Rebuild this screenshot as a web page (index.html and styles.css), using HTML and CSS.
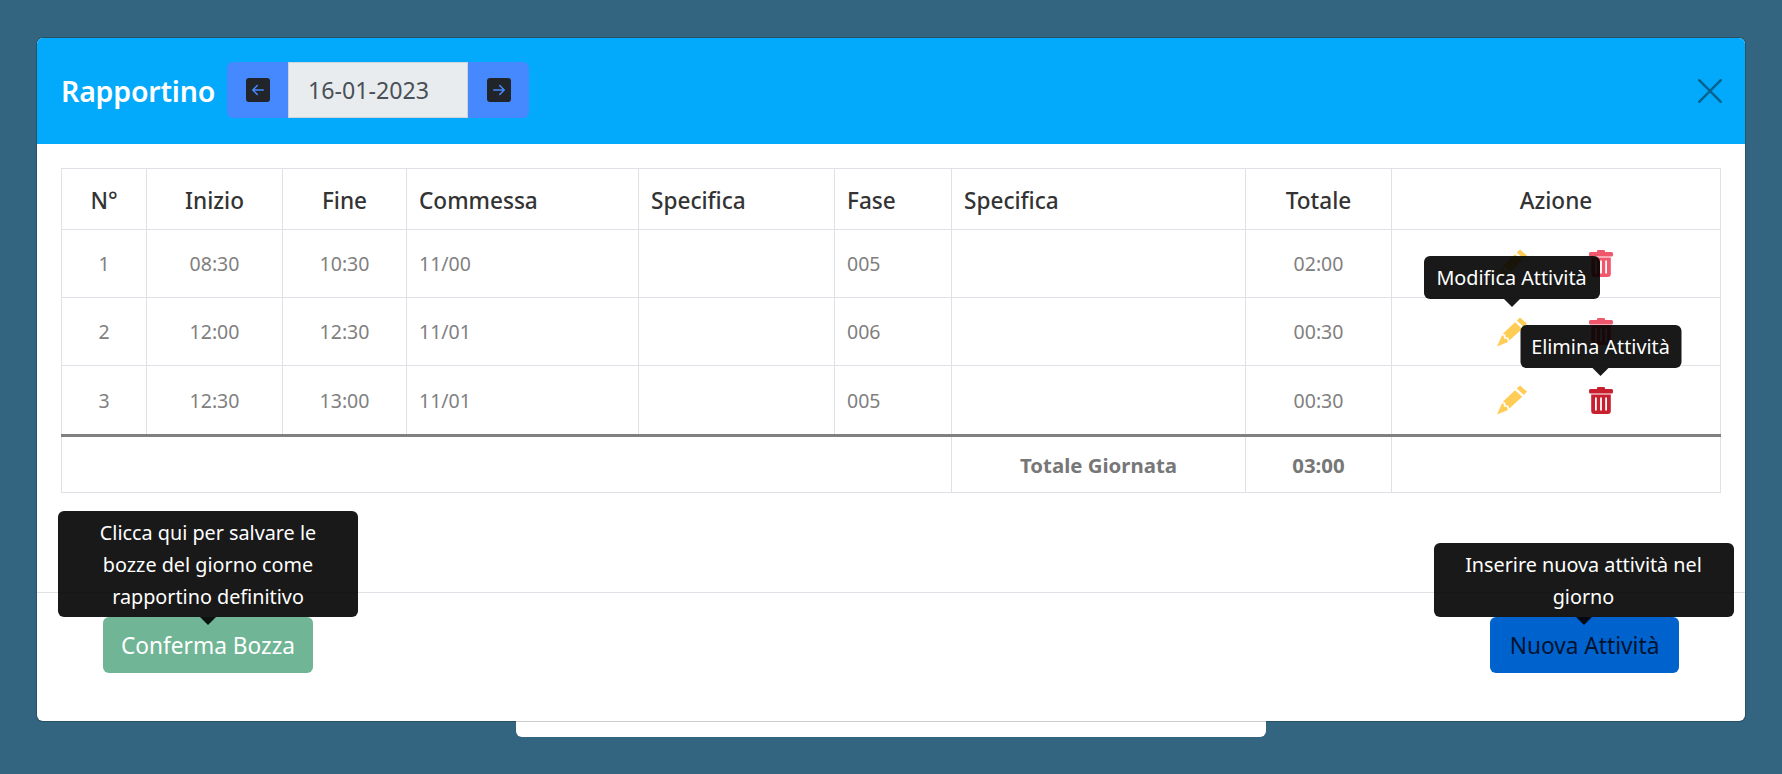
FILE: index.html
```html
<!DOCTYPE html>
<html lang="it">
<head>
<meta charset="utf-8">
<title>Rapportino</title>
<link rel="stylesheet" href="styles.css">
</head>
<body>
<div class="back-panel"></div>
<main class="modal">
  <header class="modal-header">
    <h1 class="title">Rapportino</h1>
    <div class="date-group">
      <span class="date-btn">
        <svg class="square-icon" viewBox="0 0 16 16"><path d="M16 14a2 2 0 0 1-2 2H2a2 2 0 0 1-2-2V2a2 2 0 0 1 2-2h12a2 2 0 0 1 2 2v12zm-4.5-6.5H5.707l2.147-2.146a.5.5 0 1 0-.708-.708l-3 3a.5.5 0 0 0 0 .708l3 3a.5.5 0 0 0 .708-.708L5.707 8.5H11.5a.5.5 0 0 0 0-1z"/></svg>
      </span>
      <span class="date-value">16-01-2023</span>
      <span class="date-btn">
        <svg class="square-icon" viewBox="0 0 16 16"><path d="M0 14a2 2 0 0 0 2 2h12a2 2 0 0 0 2-2V2a2 2 0 0 0-2-2H2a2 2 0 0 0-2 2v12zm4.5-6.5h5.793L8.146 5.354a.5.5 0 1 1 .708-.708l3 3a.5.5 0 0 1 0 .708l-3 3a.5.5 0 0 1-.708-.708L10.293 8.5H4.5a.5.5 0 0 1 0-1z"/></svg>
      </span>
    </div>
    <svg class="close" viewBox="0 0 24 24"><path d="M1.2 1.2 22.8 22.8M22.8 1.2 1.2 22.8"/></svg>
  </header>

  <section class="modal-body">
    <table class="grid">
      <colgroup>
        <col class="c-n"><col class="c-start"><col class="c-end"><col class="c-job"><col class="c-spec1"><col class="c-phase"><col class="c-spec2"><col class="c-total"><col class="c-action">
      </colgroup>
      <thead>
        <tr>
          <th class="mid">N°</th><th class="mid">Inizio</th><th class="mid">Fine</th><th>Commessa</th><th>Specifica</th><th>Fase</th><th>Specifica</th><th class="mid">Totale</th><th class="mid">Azione</th>
        </tr>
      </thead>
      <tbody>
        <tr class="r1">
          <td class="mid">1</td><td class="mid">08:30</td><td class="mid">10:30</td><td>11/00</td><td></td><td>005</td><td></td><td class="mid">02:00</td>
          <td><div class="actions">
            <svg class="pencil" viewBox="0 0 30 30"><path d="M23 .4 30 6.6 26.8 10 19.8 3.6zM18 5.2 25.2 11.8 12.4 23.6 11.2 20.4 8.6 20.2 8.2 17.6 5.8 16.8zM4.9 18.4 6.6 18.6 7 21.6 10 22 11 25 0 29.4z"/></svg>
            <svg class="trash soft" viewBox="0 0 24 27"><path d="M8 1.2Q8 0 9.2 0H14.8Q16 0 16 1.2V2H22.5Q24 2 24 3.5V5Q24 6.5 22.5 6.5H1.5Q0 6.5 0 5V3.5Q0 2 1.5 2H8zM2.2 7.5H21.8V24Q21.8 27 18.8 27H5.2Q2.2 27 2.2 24zM6 10.5V23.5H7.8V10.5zM11.1 10.5V23.5H12.9V10.5zM16.2 10.5V23.5H18V10.5z" fill-rule="evenodd"/></svg>
          </div></td>
        </tr>
        <tr class="r2">
          <td class="mid">2</td><td class="mid">12:00</td><td class="mid">12:30</td><td>11/01</td><td></td><td>006</td><td></td><td class="mid">00:30</td>
          <td><div class="actions">
            <span class="anchor">
              <svg class="pencil" viewBox="0 0 30 30"><path d="M23 .4 30 6.6 26.8 10 19.8 3.6zM18 5.2 25.2 11.8 12.4 23.6 11.2 20.4 8.6 20.2 8.2 17.6 5.8 16.8zM4.9 18.4 6.6 18.6 7 21.6 10 22 11 25 0 29.4z"/></svg>
              <span class="tip tip-icon tip-edit">Modifica Attività</span>
            </span>
            <svg class="trash soft" viewBox="0 0 24 27"><path d="M8 1.2Q8 0 9.2 0H14.8Q16 0 16 1.2V2H22.5Q24 2 24 3.5V5Q24 6.5 22.5 6.5H1.5Q0 6.5 0 5V3.5Q0 2 1.5 2H8zM2.2 7.5H21.8V24Q21.8 27 18.8 27H5.2Q2.2 27 2.2 24zM6 10.5V23.5H7.8V10.5zM11.1 10.5V23.5H12.9V10.5zM16.2 10.5V23.5H18V10.5z" fill-rule="evenodd"/></svg>
          </div></td>
        </tr>
        <tr class="r3">
          <td class="mid">3</td><td class="mid">12:30</td><td class="mid">13:00</td><td>11/01</td><td></td><td>005</td><td></td><td class="mid">00:30</td>
          <td><div class="actions">
            <svg class="pencil" viewBox="0 0 30 30"><path d="M23 .4 30 6.6 26.8 10 19.8 3.6zM18 5.2 25.2 11.8 12.4 23.6 11.2 20.4 8.6 20.2 8.2 17.6 5.8 16.8zM4.9 18.4 6.6 18.6 7 21.6 10 22 11 25 0 29.4z"/></svg>
            <span class="anchor">
              <svg class="trash" viewBox="0 0 24 27"><path d="M8 1.2Q8 0 9.2 0H14.8Q16 0 16 1.2V2H22.5Q24 2 24 3.5V5Q24 6.5 22.5 6.5H1.5Q0 6.5 0 5V3.5Q0 2 1.5 2H8zM2.2 7.5H21.8V24Q21.8 27 18.8 27H5.2Q2.2 27 2.2 24zM6 10.5V23.5H7.8V10.5zM11.1 10.5V23.5H12.9V10.5zM16.2 10.5V23.5H18V10.5z" fill-rule="evenodd"/></svg>
              <span class="tip tip-icon tip-del">Elimina Attività</span>
            </span>
          </div></td>
        </tr>
      </tbody>
      <tfoot>
        <tr>
          <td colspan="6"></td><td class="mid strong">Totale Giornata</td><td class="mid strong">03:00</td><td></td>
        </tr>
      </tfoot>
    </table>
  </section>

  <footer class="modal-footer">
    <span class="anchor">
      <span class="btn btn-green">Conferma Bozza</span>
      <span class="tip tip-btn">Clicca qui per salvare le bozze del giorno come rapportino definitivo</span>
    </span>
    <span class="anchor">
      <span class="btn btn-blue">Nuova Attività</span>
      <span class="tip tip-btn tip-new">Inserire nuova attività nel giorno</span>
    </span>
  </footer>
</main>
</body>
</html>
```

FILE: styles.css
```css
* { box-sizing: border-box; }

html, body { height: 100%; }

body {
  margin: 0;
  background: #336580;
  font-family: "Noto Sans", "Open Sans", sans-serif;
  overflow: hidden;
  position: relative;
  padding: 38px 37px 0;
}

.back-panel {
  position: absolute;
  left: 516px;
  top: 700px;
  width: 750px;
  height: 37px;
  background: #fff;
  border-radius: 0 0 6px 6px;
}

.modal {
  position: relative;
  width: 1708px;
  height: 683px;
  background: #fff;
  border-radius: 6px;
  box-shadow: 0 0 0 1px rgba(0, 0, 0, .2);
  display: flex;
  flex-direction: column;
}

.modal-header {
  height: 106px;
  flex: none;
  background: #03a9fa;
  border-radius: 6px 6px 0 0;
  padding: 0 23px 0 24px;
  display: flex;
  align-items: center;
}

.title {
  margin: 0;
  width: 166px;
  flex: none;
  color: #fff;
  font-size: 28.5px;
  font-weight: 600;
  letter-spacing: -.2px;
  white-space: nowrap;
  line-height: 1.2;
}

.date-group {
  display: flex;
  width: 302px;
  height: 56px;
  margin-bottom: 2px;
  background: #4689ff;
  border-radius: 6px;
  overflow: hidden;
}

.date-btn {
  width: 61px;
  display: flex;
  align-items: center;
  justify-content: center;
}

.square-icon {
  width: 24px;
  height: 24px;
  fill: #212529;
}

.date-value {
  flex: 1;
  background: #e9ecef;
  border: 1px solid #ced4da;
  color: #495057;
  font-size: 23.2px;
  padding-left: 19px;
  display: flex;
  align-items: center;
}

.close {
  margin-left: auto;
  width: 24px;
  height: 24px;
  fill: none;
  stroke: #026391;
  stroke-width: 2.4;
  stroke-linecap: round;
}

.modal-body {
  flex: none;
  height: 448px;
  padding: 24px 24px 0;
}

.grid {
  width: 1659px;
  table-layout: fixed;
  border-collapse: collapse;
  color: #808080;
  font-size: 19.5px;
}

.c-n { width: 85px; }
.c-start { width: 136px; }
.c-end { width: 124px; }
.c-job { width: 232px; }
.c-spec1 { width: 196px; }
.c-phase { width: 117px; }
.c-spec2 { width: 294px; }
.c-total { width: 146px; }
.c-action { width: 329px; }

.grid th,
.grid td {
  border: 1px solid #dee2e6;
  padding: 0 12px;
  text-align: left;
}

.grid th {
  height: 61px;
  padding-top: 2px;
  color: #333;
  font-size: 22.6px;
  font-weight: 500;
}

.grid .mid { text-align: center; }

.r1 td, .r2 td { height: 68px; }
.r3 td { height: 70px; }

.grid tfoot td {
  height: 57px;
  border-top: 3px solid #808080;
}

.grid .strong {
  font-size: 20.4px;
  font-weight: 700;
  color: #777;
}

.actions {
  display: flex;
  align-items: center;
  justify-content: center;
  gap: 62px;
  padding-right: 3px;
}

.anchor {
  position: relative;
  display: inline-flex;
}

.pencil {
  width: 30px;
  height: 30px;
  fill: #ffcd56;
}

.trash {
  width: 24px;
  height: 27px;
  fill: #c8202f;
}

.trash.soft { fill: #f0566c; }

.tip {
  position: absolute;
  z-index: 2;
  left: 50%;
  bottom: 100%;
  transform: translateX(-50%);
  background: rgba(0, 0, 0, .9);
  color: #fff;
  border-radius: 6px;
  text-align: center;
  font-size: 19.8px;
  font-weight: 400;
  line-height: 32px;
}

.tip::after {
  content: "";
  position: absolute;
  left: 50%;
  top: 100%;
  margin-left: -8px;
  border: 8px solid transparent;
  border-bottom-width: 0;
  border-top-color: rgba(0, 0, 0, .9);
}

.tip-icon {
  height: 43px;
  padding: 6px 0 5px;
  white-space: nowrap;
}

.tip-edit { margin-bottom: 18px; width: 176px; }
.tip-del { margin-bottom: 19px; width: 161px; }

.tip-btn {
  width: 300px;
  padding: 6px 28px 4px;
}

.tip-new { margin-left: -1px; }

.modal-footer {
  flex: 1;
  border-top: 1px solid #dee2e6;
  padding: 24px 66px 0;
  display: flex;
  justify-content: space-between;
  align-items: flex-start;
}

.btn {
  display: block;
  height: 56px;
  line-height: 58px;
  border-radius: 6px;
  font-size: 22.7px;
  text-align: center;
}

.btn-green {
  width: 210px;
  background: #70b595;
  color: #fff;
}

.btn-blue {
  width: 189px;
  background: #0062cc;
  color: #00132f;
}
```
